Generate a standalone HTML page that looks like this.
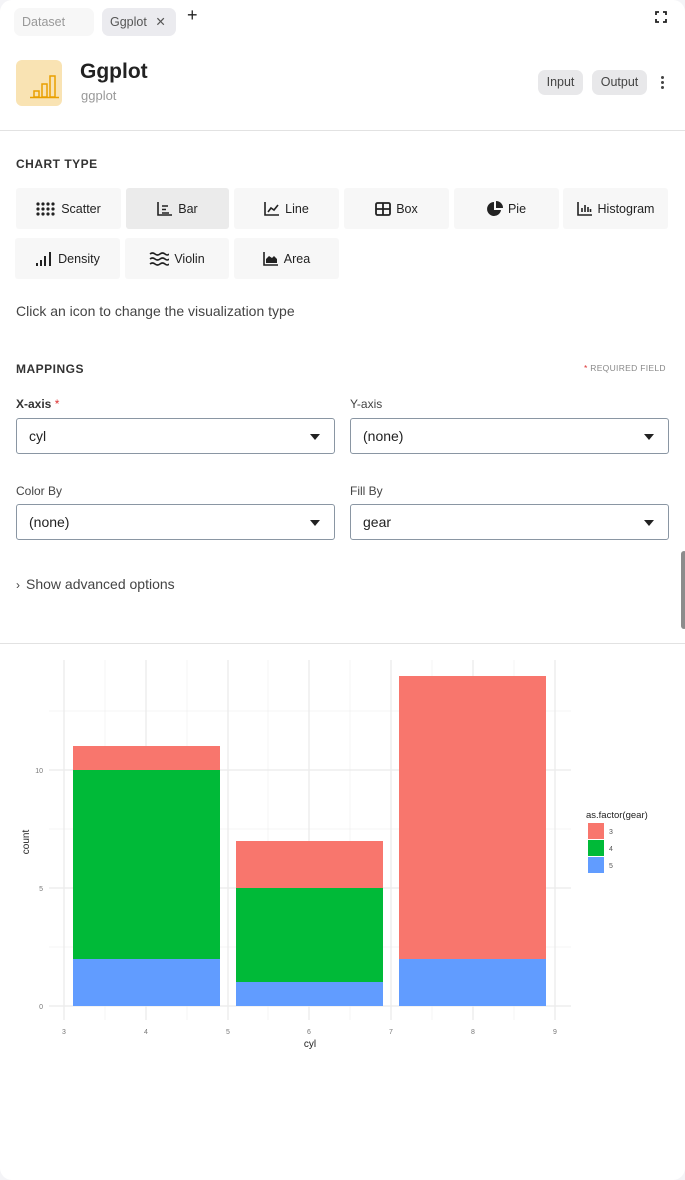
<!DOCTYPE html>
<html><head><meta charset="utf-8"><style>
*{margin:0;padding:0;box-sizing:border-box}
html,body{width:685px;height:1180px;background:#f4f4f7;overflow:hidden}
body{font-family:"Liberation Sans",sans-serif;color:#333;position:relative}
#card{position:absolute;left:0;top:0;width:685px;height:1180px;background:#fff;border-radius:12px}
.a{position:absolute}
.tab{position:absolute;top:8px;height:28px;border-radius:7px;font-size:12.5px;line-height:28px;padding-left:8px}
.btn{position:absolute;height:41px;background:#f7f7f7;border-radius:3px;font-size:12.5px;color:#222;display:flex;align-items:center;justify-content:center;gap:5px}
.sel{position:absolute;height:36px;border:1px solid #8a96a3;border-radius:3px;font-size:14px;color:#222;line-height:34px;padding-left:12px}
.sel:after{content:"";position:absolute;right:14px;top:15px;border-left:5px solid transparent;border-right:5px solid transparent;border-top:6px solid #222}
.lbl{position:absolute;font-size:12px;color:#444}
.h{position:absolute;font-size:12px;font-weight:bold;letter-spacing:.5px;color:#333}
</style></head><body><div id="card">
<div class="tab" style="left:14px;width:80px;background:#f7f7f7;color:#999">Dataset</div>
<div class="tab" style="left:102px;width:74px;background:#ebebef;color:#555">Ggplot <span style="margin-left:5px;color:#555">✕</span></div>
<div class="a" style="left:187px;top:5px;font-size:18px;color:#222">+</div>
<svg class="a" style="left:655px;top:11px" width="12" height="12" viewBox="0 0 12 12" fill="none" stroke="#222" stroke-width="1.8"><path d="M1 4V1h3M8 1h3v3M11 8v3H8M4 11H1V8"/></svg>
<div class="a" style="left:16px;top:60px;width:46px;height:46px;background:#f9e3b3;border-radius:6px"></div>
<svg class="a" style="left:16px;top:60px" width="46" height="46" viewBox="0 0 46 46" fill="none" stroke="#e9a000" stroke-width="1.5"><rect x="18" y="31" width="5" height="6"/><rect x="26" y="24" width="5" height="13"/><rect x="34" y="16" width="5" height="21"/><path d="M14 37.5h29"/></svg>
<div class="a" style="left:80px;top:60px;font-size:21px;font-weight:bold;color:#222">Ggplot</div>
<div class="a" style="left:81px;top:88px;font-size:13px;color:#999">ggplot</div>
<div class="a" style="left:538px;top:70px;width:45px;height:25px;background:#e8e8ea;border-radius:7px;font-size:12.5px;line-height:25px;text-align:center;color:#444">Input</div>
<div class="a" style="left:592px;top:70px;width:55px;height:25px;background:#e8e8ea;border-radius:7px;font-size:12.5px;line-height:25px;text-align:center;color:#444">Output</div>
<div class="a" style="left:661px;top:76px;width:3px;height:3px;background:#444;border-radius:2px;box-shadow:0 5px 0 #444,0 10px 0 #444"></div>
<div class="a" style="left:0;top:130px;width:685px;height:1px;background:#e2e2e2"></div>
<div class="h" style="left:16px;top:157px">CHART TYPE</div>
<div class="btn" style="left:16px;top:188px;width:105px"><svg width="20" height="14" viewBox="0 0 20 14" fill="#222"><g><circle cx="2" cy="2" r="1.6"/><circle cx="7" cy="2" r="1.6"/><circle cx="12" cy="2" r="1.6"/><circle cx="17" cy="2" r="1.6"/><circle cx="2" cy="7" r="1.6"/><circle cx="7" cy="7" r="1.6"/><circle cx="12" cy="7" r="1.6"/><circle cx="17" cy="7" r="1.6"/><circle cx="2" cy="12" r="1.6"/><circle cx="7" cy="12" r="1.6"/><circle cx="12" cy="12" r="1.6"/><circle cx="17" cy="12" r="1.6"/></g></svg>Scatter</div>
<div class="btn" style="left:126px;top:188px;width:103px;background:#ebebeb"><svg width="16" height="14" viewBox="0 0 16 14" fill="none" stroke="#222" stroke-width="1.6"><path d="M1 0v13h14M5 4h6M5 7.5h4M5 11h7"/></svg>Bar</div>
<div class="btn" style="left:234px;top:188px;width:105px"><svg width="16" height="14" viewBox="0 0 16 14" fill="none" stroke="#222" stroke-width="1.6"><path d="M1 0v13h14M4 10l3-4 3 2 4-5"/></svg>Line</div>
<div class="btn" style="left:344px;top:188px;width:105px"><svg width="16" height="14" viewBox="0 0 16 14" fill="none" stroke="#222" stroke-width="1.8"><rect x="1" y="1" width="14" height="12" rx="1.5"/><path d="M8 1v12M1 7h14"/></svg>Box</div>
<div class="btn" style="left:454px;top:188px;width:105px"><svg width="16" height="16" viewBox="0 0 16 16" fill="#222"><path d="M7 1a7 7 0 1 0 7 8H7z"/><path d="M9 0v7h7A7 7 0 0 0 9 0z"/></svg>Pie</div>
<div class="btn" style="left:563px;top:188px;width:105px"><svg width="16" height="14" viewBox="0 0 16 14" fill="none" stroke="#222" stroke-width="1.6"><path d="M1 0v13h14M5 10V6M8 10V3M11 10V5M13.5 10V7"/></svg>Histogram</div>
<div class="btn" style="left:15px;top:238px;width:105px"><svg width="18" height="14" viewBox="0 0 18 14" fill="#222"><rect x="1" y="11" width="2" height="3"/><rect x="5" y="8" width="2" height="6"/><rect x="9" y="4" width="2" height="10"/><rect x="14" y="0" width="2" height="14"/></svg>Density</div>
<div class="btn" style="left:125px;top:238px;width:104px"><svg width="20" height="14" viewBox="0 0 20 14" fill="none" stroke="#222" stroke-width="1.6"><path d="M1 2q2.5-2 5 0t5 0 5 0 4 0M1 7q2.5-2 5 0t5 0 5 0 4 0M1 12q2.5-2 5 0t5 0 5 0 4 0"/></svg>Violin</div>
<div class="btn" style="left:234px;top:238px;width:105px"><svg width="16" height="14" viewBox="0 0 16 14" fill="#222"><path d="M1 0v13h14" fill="none" stroke="#222" stroke-width="1.6"/><path d="M3 11V7l3-3 3 2 2-2 3 3v4z"/></svg>Area</div>
<div class="a" style="left:16px;top:303px;font-size:14px;color:#444">Click an icon to change the visualization type</div>
<div class="h" style="left:16px;top:362px">MAPPINGS</div>
<div class="a" style="left:584px;top:363px;font-size:8.5px;color:#888;letter-spacing:.3px"><span style="color:#d33">*</span> REQUIRED FIELD</div>
<div class="lbl" style="left:16px;top:397px;font-weight:bold;color:#333">X-axis <span style="color:#d33;font-weight:normal">*</span></div>
<div class="lbl" style="left:350px;top:397px">Y-axis</div>
<div class="sel" style="left:16px;top:418px;width:319px">cyl</div>
<div class="sel" style="left:350px;top:418px;width:319px">(none)</div>
<div class="lbl" style="left:16px;top:484px">Color By</div>
<div class="lbl" style="left:350px;top:484px">Fill By</div>
<div class="sel" style="left:16px;top:504px;width:319px">(none)</div>
<div class="sel" style="left:350px;top:504px;width:319px">gear</div>
<div class="a" style="left:16px;top:576px;font-size:14px;color:#444"><span style="font-size:12px;margin-right:6px">›</span>Show advanced options</div>
<div class="a" style="left:681px;top:551px;width:6px;height:78px;background:#8c8c8c;border-radius:4px"></div>
<div class="a" style="left:0;top:643px;width:685px;height:1px;background:#e2e2e2"></div>
<svg class="a" style="left:0;top:650px" width="685" height="410" viewBox="0 650 685 410" font-family="Liberation Sans,sans-serif">
<g stroke="#f2f2f2" stroke-width="0.8"><path d="M49 947H571M49 829H571M49 711H571M105 660V1020M187 660V1020M268 660V1020M350 660V1020M432 660V1020M514 660V1020"/></g>
<g stroke="#ebebeb" stroke-width="1.3"><path d="M49 1006H571M49 888H571M49 770H571M64 660V1020M146 660V1020M228 660V1020M309 660V1020M391 660V1020M473 660V1020M555 660V1020"/></g>
<rect x="73" y="959" width="147" height="47" fill="#619cff"/><rect x="73" y="770" width="147" height="189" fill="#00ba38"/><rect x="73" y="746" width="147" height="24" fill="#f8766d"/>
<rect x="236" y="982" width="147" height="24" fill="#619cff"/><rect x="236" y="888" width="147" height="94" fill="#00ba38"/><rect x="236" y="841" width="147" height="47" fill="#f8766d"/>
<rect x="399" y="959" width="147" height="47" fill="#619cff"/><rect x="399" y="676" width="147" height="283" fill="#f8766d"/>
<g font-size="7" fill="#777" text-anchor="end"><text x="43" y="773">10</text><text x="43" y="891">5</text><text x="43" y="1009">0</text></g>
<g font-size="7" fill="#777" text-anchor="middle"><text x="64" y="1034">3</text><text x="146" y="1034">4</text><text x="228" y="1034">5</text><text x="309" y="1034">6</text><text x="391" y="1034">7</text><text x="473" y="1034">8</text><text x="555" y="1034">9</text></g>
<text x="310" y="1047" font-size="10" fill="#222" text-anchor="middle">cyl</text>
<text transform="translate(29 842) rotate(-90)" font-size="10" fill="#222" text-anchor="middle">count</text>
<text x="586" y="818" font-size="9.5" fill="#222">as.factor(gear)</text>
<rect x="588" y="823" width="16" height="16" fill="#f8766d"/><rect x="588" y="840" width="16" height="16" fill="#00ba38"/><rect x="588" y="857" width="16" height="16" fill="#619cff"/>
<g font-size="7" fill="#555"><text x="609" y="834">3</text><text x="609" y="851">4</text><text x="609" y="868">5</text></g>
</svg>
</div></body></html>
